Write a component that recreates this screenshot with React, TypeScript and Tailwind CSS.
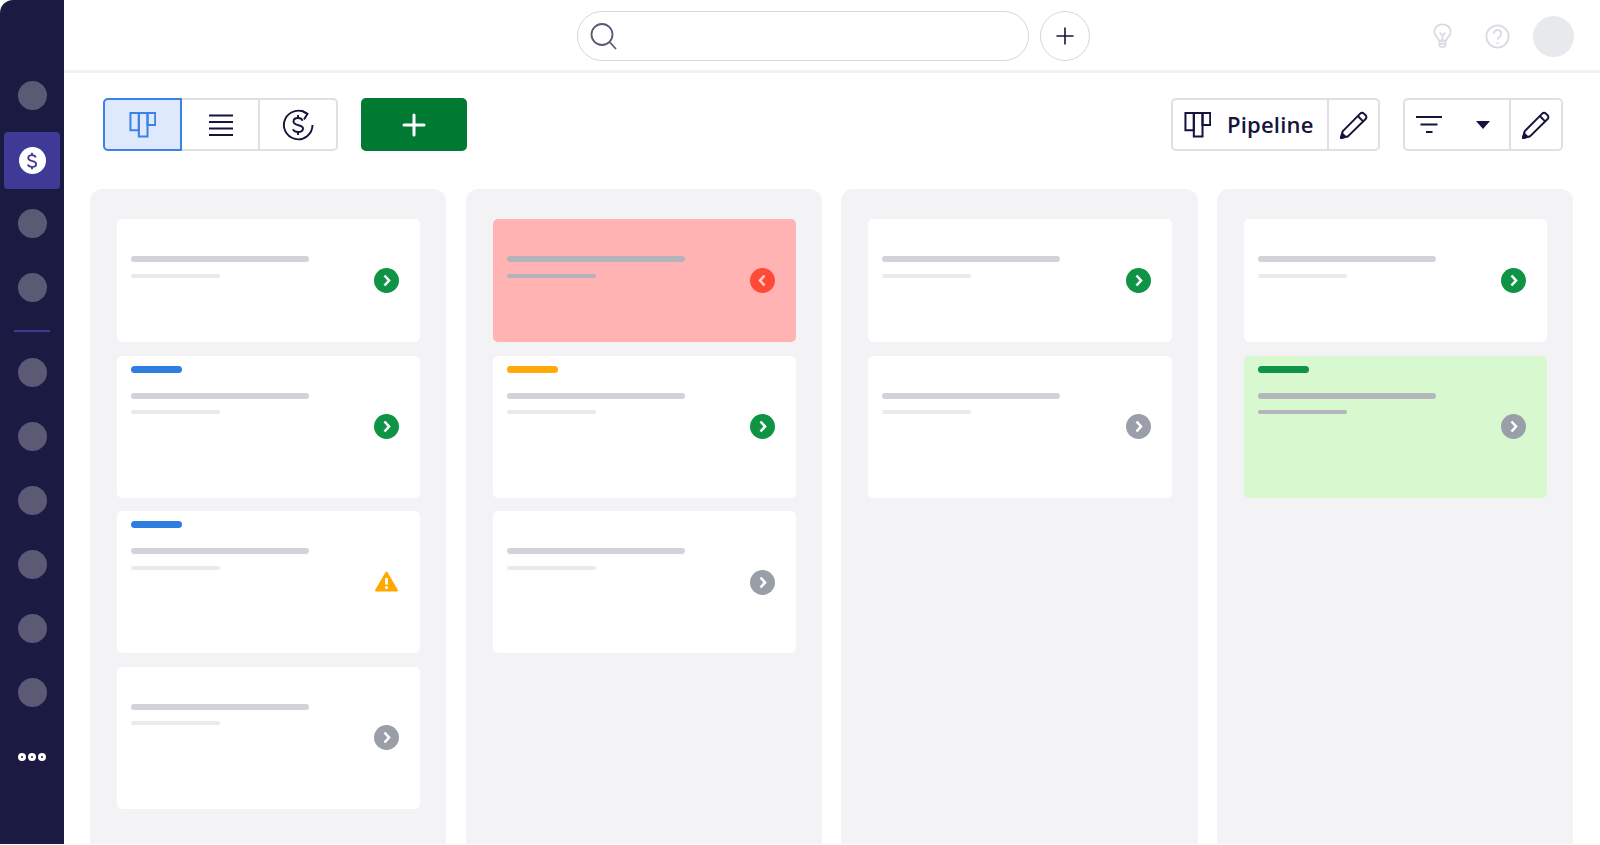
import React from "react";

const navy = "#14143c";
const dollarS = "M16.500 7.800C16 6 14.500 5 12 5 9.300 5 7.500 6.300 7.500 8.500c0 5 9.500 2.500 9.500 7 0 2.300-2 3.500-5 3.500-2.600 0-4.400-1-5-2.800";

function Kanban({ color, size = 27 }: { color: string; size?: number }) {
  return (
    <svg width={size} height={size} viewBox="0 0 28 28" fill="none" stroke={color} strokeWidth="2.100">
      <path d="M1.500 2h8.700v18H1.500z" />
      <path d="M10.200 2h9v24.500h-9z" />
      <path d="M19.200 2h8v12.500h-8z" />
    </svg>
  );
}

function Pencil() {
  return (
    <svg width="30" height="30" viewBox="0 0 30 30" fill="none" stroke={navy} strokeWidth="2" strokeLinejoin="round">
      <path d="M2 28l1.600-6.600L21.200 3.600a2.600 2.600 0 0 1 3.700 0l1.700 1.700a2.600 2.600 0 0 1 0 3.700L8.700 26.600z" />
      <path d="M18.800 6l5.600 5.600" />
      <path d="M2 28l1.200-4.400 3.200 3.200z" fill={navy} />
    </svg>
  );
}

function Chevron({ tone, left }: { tone: string; left?: boolean }) {
  return (
    <div className={`flex h-[25px] w-[25px] items-center justify-center rounded-full ${tone}`}>
      <svg width="15" height="15" viewBox="0 0 15 15" fill="none" stroke={left ? "#ffc9c4" : "#fff"} strokeWidth="2.600">
        {left ? <path d="M9.500 2.500L5 7.500l4.500 5" /> : <path d="M5.500 2.500L10 7.500l-4.500 5" />}
      </svg>
    </div>
  );
}

function Warning() {
  return (
    <svg width="25" height="25" viewBox="0 0 25 25">
      <path d="M12.500 2.500L23 20.500H2z" fill="#ffa800" stroke="#ffa800" strokeWidth="2" strokeLinejoin="round" />
      <path d="M12.500 8v6.500" stroke="#fff" strokeWidth="2.800" />
      <circle cx="12.500" cy="17.500" r="1.600" fill="#fff" />
    </svg>
  );
}

type CardData = {
  h: string;
  bg?: string;
  tag?: string;
  line?: string;
  sub?: string;
  status: "green" | "gray" | "red" | "warn";
};

function Card({ h, bg = "bg-white", tag, line = "bg-[#d2d2da]", sub = "bg-[#e9eaee]", status }: CardData) {
  return (
    <div className={`flex items-center justify-between rounded-[5px] pr-[21px] pl-[14px] ${h} ${bg}`}>
      <div className="flex h-full flex-col self-start">
        {tag ? <div className={`mt-[10px] mb-[20px] h-[7px] w-[51px] rounded-full ${tag}`} /> : <div className="h-[37px]" />}
        <div className={`h-[6px] w-[178px] rounded-full ${line}`} />
        <div className={`mt-[11.500px] h-[4px] w-[89px] rounded-full ${sub}`} />
      </div>
      {status === "green" && <Chevron tone="bg-[#0f9345]" />}
      {status === "gray" && <Chevron tone="bg-[#9a9ea8]" />}
      {status === "red" && <Chevron tone="bg-[#ff4a38]" left />}
      {status === "warn" && <Warning />}
    </div>
  );
}

const tall1 = "h-[123px]";
const tall2 = "h-[142px]";

const columns: CardData[][] = [
  [
    { h: tall1, status: "green" },
    { h: tall2, tag: "bg-[#2f7de1]", status: "green" },
    { h: tall2, tag: "bg-[#2f7de1]", status: "warn" },
    { h: tall2, status: "gray" },
  ],
  [
    { h: tall1, bg: "bg-[#ffb3b3]", line: "bg-[#b3b3bb]", sub: "bg-[#b3b3bb]", status: "red" },
    { h: tall2, tag: "bg-[#ffa90a]", status: "green" },
    { h: tall2, status: "gray" },
  ],
  [
    { h: tall1, status: "green" },
    { h: tall2, status: "gray" },
  ],
  [
    { h: tall1, status: "green" },
    { h: tall2, bg: "bg-[#d8f8d0]", tag: "bg-[#0f9345]", line: "bg-[#b3b7bb]", sub: "bg-[#b3b7bb]", status: "gray" },
  ],
];

function NavDot() {
  return (
    <div className="flex h-16 w-full items-center justify-center">
      <div className="h-[29px] w-[29px] rounded-full bg-[#5a5a75]" />
    </div>
  );
}

function Sidebar() {
  return (
    <aside className="flex h-[844px] w-16 shrink-0 flex-col rounded-tl-[13px] bg-[#1a1a42] pt-[63.500px] pl-[1px]">
      <NavDot />
      <div className="mx-[3px] mt-[4.500px] flex h-[57px] w-[56px] items-center justify-center rounded-[4px] bg-[#3e3a96]">
        <div className="flex h-[27px] w-[27px] items-center justify-center rounded-full bg-white">
          <svg width="20" height="20" viewBox="0 0 24 24" fill="none" stroke="#3e3a96" strokeWidth="2.200">
            <path d="M12 2v3M12 19v3" />
            <path d={dollarS} />
          </svg>
        </div>
      </div>
      <div className="mt-[2.500px]">
        <NavDot />
        <NavDot />
      </div>
      <div className="mx-[13px] mt-[10px] mb-[8.500px] h-[2px] w-[36px] bg-[#3e3a96]" />
      <NavDot />
      <NavDot />
      <NavDot />
      <NavDot />
      <NavDot />
      <NavDot />
      <div className="mt-[29px] flex justify-center gap-[2px] pr-[2px]">
        <div className="h-[8px] w-[8px] rounded-full border-[3px] border-white" />
        <div className="h-[8px] w-[8px] rounded-full border-[3px] border-white" />
        <div className="h-[8px] w-[8px] rounded-full border-[3px] border-white" />
      </div>
    </aside>
  );
}

function Header() {
  return (
    <header className="flex h-[73px] shrink-0 items-start border-b-[3px] border-[#f1f1f3] pt-[11px] pl-[513px]">
      <div className="flex h-[50px] w-[452px] items-center rounded-full border border-[#d5d6de] pl-3">
        <svg width="30" height="30" viewBox="0 0 30 30" fill="none" stroke="#565a75" strokeWidth="1.800">
          <circle cx="12" cy="13.500" r="10.500" />
          <path d="M19.500 21l6.500 7" />
        </svg>
      </div>
      <div className="ml-[11px] flex h-[50px] w-[50px] items-center justify-center rounded-full border border-[#d5d6de]">
        <svg width="18" height="18" viewBox="0 0 18 18" fill="none" stroke={navy} strokeWidth="1.600">
          <path d="M9 0.500v17M0.500 9h17" />
        </svg>
      </div>
      <div className="ml-auto flex h-[50px] items-center pr-[26px]">
        <svg width="19" height="26" viewBox="0 0 22 28" fill="none" stroke="#d9dae2" strokeWidth="2.100">
          <path d="M7 19.500c0-3-5.500-5-5.500-10.500a9.500 8.500 0 0 1 19 0c0 5.500-5.500 7.500-5.500 10.500z" />
          <path d="M7.500 19.500v5.500a2 2 0 0 0 2 1.500h3a2 2 0 0 0 2-1.500v-5.500M7.500 23h7" />
          <path d="M7.500 10l3.500 3.500 3.500-3.500M11 13.500v6" />
        </svg>
        <svg className="ml-[33px]" width="25" height="25" viewBox="0 0 27 27" fill="none" stroke="#d9dae2" strokeWidth="2">
          <circle cx="13.500" cy="13.500" r="12" />
          <path d="M9.500 10.500a4 4 0 1 1 6.200 3.300c-1.400 1-2.200 1.600-2.200 3" />
          <path d="M13.500 19.500v2" />
        </svg>
        <div className="ml-[23px] h-[41px] w-[41px] rounded-full bg-[#e8e9ed]" />
      </div>
    </header>
  );
}

function Toolbar() {
  return (
    <div className="mt-[25px] flex h-[53px] shrink-0 items-stretch pr-[37.500px] pl-[39px]">
      <div className="flex rounded-[5px] border-2 border-[#dfe0e6]">
        <div className="-m-[2px] flex w-[79px] items-center justify-center rounded-l-[5px] border-2 border-[#3b82e8] bg-[#deeafb]">
          <Kanban color="#3b82e8" />
        </div>
        <div className="ml-[3px] flex w-[77px] items-center justify-center border-r-2 border-[#dfe0e6]">
          <svg width="26" height="24" viewBox="0 0 26 24" fill="none" stroke={navy} strokeWidth="2">
            <path d="M1 2.500h24M1 9h24M1 15.500h24M1 22h24" />
          </svg>
        </div>
        <div className="flex w-[76px] items-center justify-center">
          <svg width="32" height="32" viewBox="0 0 32 32" fill="none" stroke={navy} strokeWidth="1.900">
            <path d="M30.500 16a14.300 14.300 0 1 1-5.400-11.200" />
            <path d="M19.500 1.500l6 3.300-3.500 5.700" />
            <g transform="translate(4 4)">
              <path d="M12 2v3M12 19v3" />
              <path d={dollarS} />
            </g>
          </svg>
        </div>
      </div>
      <button className="ml-[22.500px] flex w-[106.500px] items-center justify-center rounded-[5px] bg-[#007a33]">
        <svg width="24" height="24" viewBox="0 0 24 24" fill="none" stroke="#fff" strokeWidth="3" strokeLinecap="round">
          <path d="M12 2v20M2 12h20" />
        </svg>
      </button>
      <div className="ml-auto flex w-[209px] rounded-[5px] border-2 border-[#dfe0e6]">
        <div className="flex w-[156px] items-center border-r-2 border-[#dfe0e6] pl-[11px]">
          <Kanban color={navy} />
          <span className="mb-[2px] ml-[16px] font-['Open_Sans',sans-serif] text-[22px] leading-none font-semibold tracking-[0.2px] text-[#14143c]">Pipeline</span>
        </div>
        <div className="flex flex-1 items-center justify-center"><Pencil /></div>
      </div>
      <div className="ml-[23px] flex w-[159.500px] rounded-[5px] border-2 border-[#dfe0e6]">
        <div className="flex w-[106px] items-center border-r-2 border-[#dfe0e6] pl-[10px]">
          <svg width="28" height="22" viewBox="0 0 28 22" fill="none" stroke={navy} strokeWidth="2">
            <path d="M1 3h26M5.500 10.500h17M11 18h6.500" />
          </svg>
          <svg className="ml-[32px]" width="16" height="10" viewBox="0 0 16 10" fill={navy}>
            <path d="M1 1h14L8 9z" />
          </svg>
        </div>
        <div className="flex flex-1 items-center justify-center"><Pencil /></div>
      </div>
    </div>
  );
}

export default function App() {
  return (
    <div className="flex h-[845px] w-[1600px] overflow-hidden bg-white">
      <Sidebar />
      <main className="flex min-w-0 flex-1 flex-col">
        <Header />
        <Toolbar />
        <div className="mt-[38px] flex h-[655px] gap-[19.500px] pl-[26px]">
          {columns.map((cards, i) => (
            <section key={i} className="flex h-full w-[356.200px] shrink-0 flex-col gap-[13.500px] rounded-t-[12px] bg-[#f3f3f6] pt-[30px] pr-[26px] pl-[27px]">
              {cards.map((c, j) => (
                <Card key={j} {...c} />
              ))}
            </section>
          ))}
        </div>
      </main>
    </div>
  );
}
